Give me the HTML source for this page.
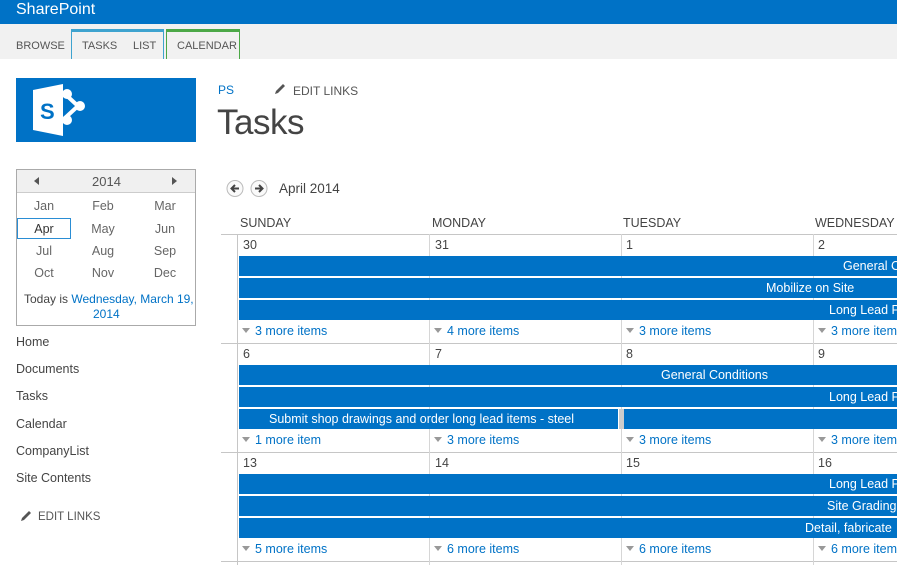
<!DOCTYPE html>
<html><head><style>
*{margin:0;padding:0;box-sizing:border-box}
body{width:897px;height:565px;overflow:hidden;background:#fff;font-family:"Liberation Sans",sans-serif;color:#444;position:relative}
.a{position:absolute;white-space:nowrap}
.top{left:0;top:0;width:897px;height:24px;background:#0072c6;color:#fff;font-size:16px;padding:1px 0 0 16px}
.rib{left:0;top:24px;width:897px;height:35px;background:#f1f1f1}
.tab{font-size:11px;color:#555;top:40px}
.bar{position:absolute;height:20px;background:#0072c6;color:#fff;font-size:12.5px;line-height:21px;overflow:hidden;white-space:nowrap}
.more{font-size:12.5px;color:#0072c6;margin-top:1px}
.more:before{content:"";display:inline-block;border:4px solid transparent;border-top:5px solid #999;border-bottom:0;margin-right:5px;vertical-align:2px}
.d{font-size:12.5px;color:#444;margin-top:1px}
.hl{position:absolute;height:1px;background:#c6c6c6}
.vl{position:absolute;width:1px;background:#d6d6d6}
.nav{font-size:12.5px;color:#444;left:16px;margin-top:1px}
.m{font-size:12.5px;color:#666;width:56px;text-align:center;margin-top:1px}
</style></head><body>
<div class="a top">SharePoint</div>
<div class="a rib"></div>
<div class="a" style="left:71px;top:29px;width:93px;height:30px;border:1px solid #3ea3cf;border-top:3px solid #3ea3cf;border-bottom:0"></div>
<div class="a" style="left:166px;top:29px;width:74px;height:30px;border:1px solid #4ca847;border-top:3px solid #4ca847;border-bottom:0"></div>
<div class="a tab" style="left:16px">BROWSE</div>
<div class="a tab" style="left:82px">TASKS</div>
<div class="a tab" style="left:133px">LIST</div>
<div class="a tab" style="left:177px">CALENDAR</div>

<div class="a" style="left:16px;top:78px;width:180px;height:64px;background:#0072c6"></div>
<svg class="a" style="left:30px;top:82px" width="60" height="56" viewBox="0 0 60 56">
<path d="M3 8 L33 2 L33 54 L3 48 Z" fill="#fff"/>
<text x="10" y="37" font-family="Liberation Sans" font-weight="bold" font-size="22" fill="#0072c6">S</text>
<path d="M35 12 L48 24 L35 36" stroke="#fff" stroke-width="4" fill="none"/>
<circle cx="37" cy="12" r="5" fill="#fff"/><circle cx="50" cy="24" r="5" fill="#fff"/><circle cx="37" cy="38" r="5" fill="#fff"/>
</svg>
<div class="a" style="left:218px;top:83px;font-size:12px;color:#0072c6">PS</div>
<svg class="a" style="left:273px;top:83px" width="14" height="13" viewBox="0 0 14 13"><path d="M2 11 L3 8 L10 1 L12 3 L5 10 Z" fill="#555"/></svg>
<div class="a" style="left:293px;top:84px;font-size:12px;color:#555">EDIT LINKS</div>
<div class="a" style="left:217px;top:103px;font-size:35px;color:#444;letter-spacing:-0.5px">Tasks</div>

<div class="a" style="left:16px;top:169px;width:180px;height:157px;border:1px solid #aaa"></div>
<div class="a" style="left:17px;top:170px;width:178px;height:23px;background:#f0f0f0;border-bottom:1px solid #ccc"></div>
<div class="a" style="left:34px;top:177px;width:0;height:0;border:4px solid transparent;border-right:5px solid #555;border-left:0"></div>
<div class="a" style="left:172px;top:177px;width:0;height:0;border:4px solid transparent;border-left:5px solid #555;border-right:0"></div>
<div class="a" style="left:92px;top:174px;font-size:13px;color:#555">2014</div>
<div class="a m" style="left:16px;top:198px">Jan</div><div class="a m" style="left:75px;top:198px">Feb</div><div class="a m" style="left:137px;top:198px">Mar</div>
<div class="a" style="left:17px;top:218px;width:54px;height:21px;border:1px solid #2a8dd4"></div>
<div class="a m" style="left:16px;top:221px;color:#333">Apr</div><div class="a m" style="left:75px;top:221px">May</div><div class="a m" style="left:137px;top:221px">Jun</div>
<div class="a m" style="left:16px;top:243px">Jul</div><div class="a m" style="left:75px;top:243px">Aug</div><div class="a m" style="left:137px;top:243px">Sep</div>
<div class="a m" style="left:16px;top:265px">Oct</div><div class="a m" style="left:75px;top:265px">Nov</div><div class="a m" style="left:137px;top:265px">Dec</div>
<div class="a" style="left:24px;top:292px;font-size:12px;color:#444">Today is <span style="color:#0072c6">Wednesday, March 19,</span></div>
<div class="a" style="left:93px;top:307px;font-size:12px;color:#0072c6">2014</div>

<div class="a nav" style="top:334px">Home</div>
<div class="a nav" style="top:361px">Documents</div>
<div class="a nav" style="top:388px">Tasks</div>
<div class="a nav" style="top:416px">Calendar</div>
<div class="a nav" style="top:443px">CompanyList</div>
<div class="a nav" style="top:470px">Site Contents</div>
<svg class="a" style="left:19px;top:510px" width="14" height="13" viewBox="0 0 14 13"><path d="M2 11 L3 8 L10 1 L12 3 L5 10 Z" fill="#555"/></svg>
<div class="a" style="left:38px;top:511px;font-size:11.5px;color:#555">EDIT LINKS</div>

<svg class="a" style="left:226px;top:179px" width="44" height="19" viewBox="0 0 44 19">
<circle cx="9" cy="9.5" r="8" fill="#fafafa" stroke="#bbb"/><path d="M13 9.5 H6 M9 6 L5.5 9.5 L9 13" stroke="#444" stroke-width="2" fill="none"/>
<circle cx="33" cy="9.5" r="8" fill="#fafafa" stroke="#bbb"/><path d="M29 9.5 H36 M33 6 L36.5 9.5 L33 13" stroke="#444" stroke-width="2" fill="none"/>
</svg>
<div class="a" style="left:279px;top:181px;font-size:13.5px;color:#444">April 2014</div>
<div class="a" style="left:240px;top:216px;font-size:12.5px">SUNDAY</div>
<div class="a" style="left:432px;top:216px;font-size:12.5px">MONDAY</div>
<div class="a" style="left:623px;top:216px;font-size:12.5px">TUESDAY</div>
<div class="a" style="left:815px;top:216px;font-size:12.5px">WEDNESDAY</div>

<div class="hl" style="left:221px;top:234px;width:676px"></div>
<div class="hl" style="left:221px;top:343px;width:676px"></div>
<div class="hl" style="left:221px;top:452px;width:676px"></div>
<div class="hl" style="left:221px;top:561px;width:676px"></div>
<div class="vl" style="left:237px;top:234px;height:331px;background:#c6c6c6"></div>
<div class="vl" style="left:429px;top:234px;height:331px"></div>
<div class="vl" style="left:621px;top:234px;height:331px"></div>
<div class="vl" style="left:813px;top:234px;height:331px"></div>

<div class="a d" style="left:243px;top:237px">30</div><div class="a d" style="left:435px;top:237px">31</div><div class="a d" style="left:626px;top:237px">1</div><div class="a d" style="left:818px;top:237px">2</div>
<div class="bar" style="left:239px;top:256px;width:658px"><span style="position:absolute;left:604px">General Conditions</span></div>
<div class="bar" style="left:239px;top:278px;width:658px"><span style="position:absolute;left:527px">Mobilize on Site</span></div>
<div class="bar" style="left:239px;top:300px;width:658px"><span style="position:absolute;left:590px">Long Lead Procurement</span></div>
<div class="a more" style="left:242px;top:323px">3 more items</div><div class="a more" style="left:434px;top:323px">4 more items</div><div class="a more" style="left:626px;top:323px">3 more items</div><div class="a more" style="left:818px;top:323px">3 more items</div>

<div class="a d" style="left:243px;top:346px">6</div><div class="a d" style="left:435px;top:346px">7</div><div class="a d" style="left:626px;top:346px">8</div><div class="a d" style="left:818px;top:346px">9</div>
<div class="bar" style="left:239px;top:365px;width:658px"><span style="position:absolute;left:422px">General Conditions</span></div>
<div class="bar" style="left:239px;top:387px;width:658px"><span style="position:absolute;left:590px">Long Lead Procurement</span></div>
<div class="bar" style="left:239px;top:409px;width:379px;padding-left:30px">Submit shop drawings and order long lead items - steel</div>
<div class="a" style="left:619px;top:409px;width:5px;height:20px;background:#ccc"></div>
<div class="bar" style="left:624px;top:409px;width:273px"></div>
<div class="a more" style="left:242px;top:432px">1 more item</div><div class="a more" style="left:434px;top:432px">3 more items</div><div class="a more" style="left:626px;top:432px">3 more items</div><div class="a more" style="left:818px;top:432px">3 more items</div>

<div class="a d" style="left:243px;top:455px">13</div><div class="a d" style="left:435px;top:455px">14</div><div class="a d" style="left:626px;top:455px">15</div><div class="a d" style="left:818px;top:455px">16</div>
<div class="bar" style="left:239px;top:474px;width:658px"><span style="position:absolute;left:590px">Long Lead Procurement</span></div>
<div class="bar" style="left:239px;top:496px;width:658px"><span style="position:absolute;left:588px">Site Grading</span></div>
<div class="bar" style="left:239px;top:518px;width:658px"><span style="position:absolute;left:566px">Detail, fabricate</span></div>
<div class="a more" style="left:242px;top:541px">5 more items</div><div class="a more" style="left:434px;top:541px">6 more items</div><div class="a more" style="left:626px;top:541px">6 more items</div><div class="a more" style="left:818px;top:541px">6 more items</div>
</body></html>
